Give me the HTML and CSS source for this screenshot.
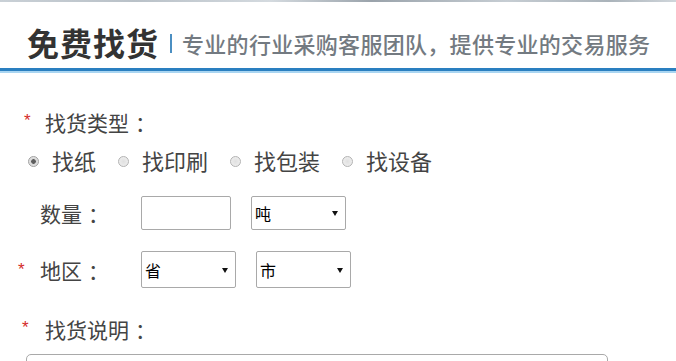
FILE: index.html
```html
<!DOCTYPE html>
<html lang="zh-CN">
<head>
<meta charset="utf-8">
<title>免费找货</title>
<link rel="stylesheet" href="styles.css">
</head>
<body>
<div class="top-strip"></div>
<header class="header">
  <h1 class="title">免费找货</h1>
  <span class="sep"></span>
  <span class="subtitle">专业的行业采购客服团队，提供专业的交易服务</span>
</header>
<div class="header-line"></div>
<form class="form">
  <div class="row row-type row-b">
    <span class="star">*</span><span class="label-text">找货类型<span class="colon">：</span></span>
  </div>
  <div class="row row-radios">
    <label class="radio-item"><input type="radio" name="t" class="radio" checked><span>找纸</span></label>
    <label class="radio-item"><input type="radio" name="t" class="radio"><span>找印刷</span></label>
    <label class="radio-item"><input type="radio" name="t" class="radio"><span>找包装</span></label>
    <label class="radio-item"><input type="radio" name="t" class="radio"><span>找设备</span></label>
  </div>
  <div class="row row-qty row-a">
    <span class="label"><span class="star star-hidden">*</span><span class="label-text">数量<span class="colon">：</span></span></span>
    <input type="text" class="text-input">
    <span class="select-wrap sel-unit"><select class="select"><option>吨</option></select></span>
  </div>
  <div class="row row-area row-a">
    <span class="label"><span class="star">*</span><span class="label-text">地区<span class="colon">：</span></span></span>
    <span class="select-wrap sel-area"><select class="select"><option>省</option></select></span>
    <span class="select-wrap sel-area sel-gap"><select class="select"><option>市</option></select></span>
  </div>
  <div class="row row-desc row-c">
    <span class="star">*</span><span class="label-text">找货说明<span class="colon">：</span></span>
  </div>
  <textarea class="desc"></textarea>
</form>
</body>
</html>
```
FILE: styles.css
```css
html, body {
  margin: 0;
  padding: 0;
  background: #fff;
}
body {
  font-family: "Noto Sans CJK SC", "Noto Sans", sans-serif;
  color: #444;
  width: 676px;
  height: 361px;
  overflow: hidden;
}
.top-strip {
  height: 2px;
  background: linear-gradient(90deg, #c9d0d6 0%, #b9c1c8 20%, #d4dadf 40%, #9aa3ab 55%, #c6cdd3 75%, #aab3ba 90%, #d0d6db 100%);
}
.header {
  height: 69px;
  box-sizing: border-box;
  padding: 13px 0 0 27px;
  display: flex;
  align-items: center;
  border-bottom: 3px solid #2a7fc0;
}
.title {
  margin: 0;
  font-size: 32px;
  line-height: 1;
  font-weight: 700;
  color: #333;
  letter-spacing: 1px;
}
.sep {
  width: 2px;
  height: 19px;
  background: #4b8fc2;
  margin: 3px 10px 0 11px;
}
.subtitle {
  font-size: 22px;
  line-height: 1;
  font-weight: 500;
  color: #737a81;
  letter-spacing: 0.3px;
  margin-top: 2px;
}
.header-line {
  height: 2px;
  background: #a9d5f1;
}
.form {
  padding-top: 29px;
  display: flex;
  flex-direction: column;
}
.row {
  display: flex;
  align-items: center;
  font-size: 21px;
  color: #444;
}
.colon {
  margin-left: 6px;
}
.row-a { padding-left: 18px; }
.row-b { padding-left: 24px; }
.row-c { padding-left: 22px; }
.star {
  font-family: "Liberation Sans", sans-serif;
  font-size: 17px;
  color: #d42a2a;
  width: 21px;
  align-self: flex-start;
  padding-top: 9px;
}
.row-c .star { width: 23px; }
.row-a .star { width: 22px; }
.star-hidden { visibility: hidden; }
.label {
  display: flex;
  align-items: center;
  width: 123px;
  height: 100%;
}
.row-area .label .star { padding-top: 9px; }
.row-type { height: 40px; }
.row-radios {
  height: 36px;
  padding-left: 28px;
  font-size: 22px;
}
.radio-item {
  display: flex;
  align-items: center;
  margin-right: 22px;
}
.radio {
  appearance: none;
  -webkit-appearance: none;
  width: 11px;
  height: 11px;
  margin: 0 13px 0 0;
  border: 1px solid #b3b3b3;
  border-radius: 50%;
  background: radial-gradient(circle, #e0e0e0 0%, #f2f2f2 100%);
  box-sizing: border-box;
  position: relative;
  top: 1px;
}
.radio:checked {
  background: radial-gradient(circle, #5e5e5e 0 2px, #d6d6d6 2.6px, #f0f0f0 100%);
  border-color: #a0a0a0;
}
.row-qty {
  height: 34px;
  margin-top: 18px;
}
.row-area {
  height: 37px;
  margin-top: 21px;
}
.row-desc {
  height: 30px;
  margin-top: 26px;
}
.row-desc .star { padding-top: 4px; }
.row-type .star { padding-top: 9px; }
.text-input {
  width: 90px;
  height: 34px;
  box-sizing: border-box;
  border: 1px solid #a9a9a9;
  border-radius: 2px;
  margin: 0;
  padding: 0;
}
.select-wrap {
  position: relative;
  display: block;
  height: 100%;
}
.select-wrap::after {
  content: "";
  position: absolute;
  right: 8px;
  top: 50%;
  margin-top: -2px;
  border-left: 3px solid transparent;
  border-right: 3px solid transparent;
  border-top: 5px solid #111;
  pointer-events: none;
}
.sel-unit {
  width: 95px;
  margin-left: 20px;
}
.sel-area { width: 95px; }
.sel-gap { margin-left: 20px; }
.select {
  appearance: none;
  -webkit-appearance: none;
  width: 100%;
  height: 100%;
  box-sizing: border-box;
  border: 1px solid #a9a9a9;
  border-radius: 2px;
  background: #fff;
  margin: 0;
  padding: 0 0 0 3px;
  font-family: "Noto Sans CJK SC", sans-serif;
  font-size: 16px;
  color: #000;
}
.desc {
  display: block;
  margin: 10px 0 0 26px;
  width: 582px;
  height: 60px;
  box-sizing: border-box;
  border: 1px solid #a9a9a9;
  border-radius: 5px;
  resize: none;
}
```
